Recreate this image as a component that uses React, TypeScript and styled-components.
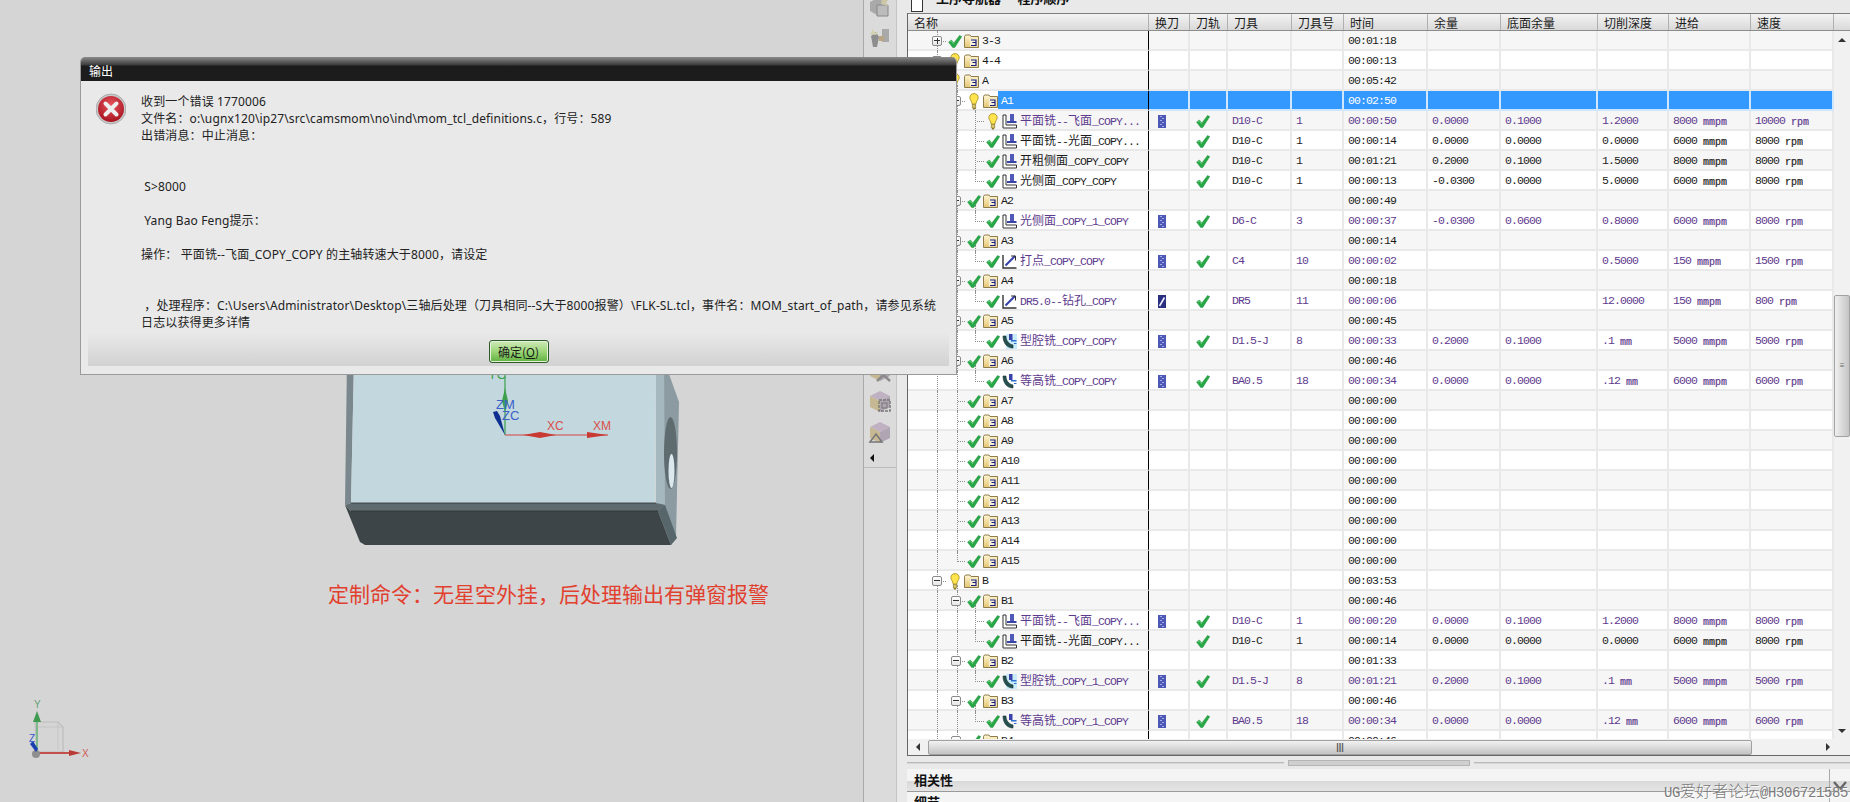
import React from "react";
import styled, { createGlobalStyle } from "styled-components";

const Global = createGlobalStyle`
  html, body { margin: 0; padding: 0; background: #d5d5d5; }
  #root { width: 1850px; height: 802px; overflow: hidden; }
  * { box-sizing: border-box; }
`;

const CJK = `"Noto Sans CJK SC", sans-serif`;
const COLS = [241, 41, 38, 64, 52, 84, 73, 97, 71, 82, 83];
const HEADERS = ["名称", "换刀", "刀轨", "刀具", "刀具号", "时间", "余量", "底面余量", "切削深度", "进给", "速度"];

const Page = styled.div`
  position: relative;
  display: flex;
  width: 1850px;
  height: 802px;
  overflow: hidden;
`;
const Viewport = styled.div`
  position: relative;
  width: 863px;
  flex: none;
  background: #d5d5d5;
`;
const Scene = styled.svg`
  display: block;
  width: 863px;
  height: 802px;
`;
const Caption = styled.div`
  position: absolute;
  left: 328px;
  top: 577px;
  font: 400 21px/32px ${CJK};
  color: #e2402f;
  white-space: nowrap;
`;
const ToolStrip = styled.div`
  width: 34px;
  height: 802px;
  flex: none;
  display: flex;
  flex-direction: column;
  align-items: center;
  background: #dbdbdb;
  border-left: 1px solid #a9a9a9;
  border-right: 1px solid #c4c4c4;
`;
const ToolGroup = styled.div`
  width: 100%;
  height: 472px;
  flex: none;
  display: flex;
  flex-direction: column;
  align-items: center;
  gap: 8px;
  margin-top: -4px;
  border-bottom: 1px solid #bcbcbc;
`;
const ToolGap = styled.div`
  flex: 1;
`;
const StripArrow = styled.div`
  width: 0;
  height: 0;
  margin: 2px 0 5px -16px;
  border-top: 4px solid transparent;
  border-bottom: 4px solid transparent;
  border-right: 4px solid #111;
`;
const Panel = styled.div`
  flex: 1;
  min-width: 0;
  display: flex;
  flex-direction: column;
  padding-left: 10px;
  background: #e9e9e9;
`;
const NavHeader = styled.div`
  height: 13px;
  flex: none;
  display: flex;
  align-items: flex-end;
  padding-left: 4px;
  overflow: hidden;
`;
const NavBox = styled.div`
  width: 12px;
  height: 14px;
  flex: none;
  margin-bottom: 1px;
  background: #fff;
  border: 1px solid #333;
`;
const NavTitle = styled.div`
  margin: 0 0 8px 13px;
  font: 700 13px/14px ${CJK};
  color: #111;
  white-space: pre;
`;
const TableBox = styled.div`
  height: 743px;
  flex: none;
  display: flex;
  flex-direction: column;
  border-top: 1px solid #7d7d7d;
  border-bottom: 1px solid #666;
  border-left: 1px solid #666;
`;
const HeadRow = styled.div`
  height: 17px;
  flex: none;
  display: flex;
  background: linear-gradient(#f3f3f3, #d9d9d9);
  border-bottom: 1px solid #8c8c8c;
`;
const HeadCell = styled.div<{ $w: number }>`
  width: ${(p) => p.$w}px;
  flex: none;
  padding-left: 6px;
  font: 400 12px/17px ${CJK};
  color: #1a1a1a;
  border-right: 1px solid #b0b0b0;
  white-space: nowrap;
`;
const BodyWrap = styled.div`
  height: 708px;
  flex: none;
  display: flex;
`;
const Rows = styled.div`
  width: 926px;
  flex: none;
  overflow: hidden;
`;
const Row = styled.div<{ $odd: boolean; $purple: boolean; $selected: boolean }>`
  height: 20px;
  display: flex;
  background: ${(p) => (p.$odd ? "#fff" : "#f6f6f6")};
  color: ${(p) => (p.$selected ? "#fff" : p.$purple ? "#5e3a8e" : "#1c1c1c")};
  font: 400 11.5px/18px "Liberation Mono", monospace;
  letter-spacing: -0.9px;
  white-space: nowrap;
`;
const NameCell = styled.div<{ $level: number }>`
  position: relative;
  width: ${COLS[0]}px;
  flex: none;
  display: flex;
  align-items: center;
  height: 20px;
  padding: 2px 0 0 ${(p) => 24 + (p.$level - 1) * 19}px;
  border-bottom: 2px solid #e9e9e9;
  border-right: 1px solid #000;
`;
const Guide = styled.i<{ $x: number; $part: string }>`
  position: absolute;
  left: ${(p) => p.$x}px;
  top: ${(p) => (p.$part === "bottom" ? "14px" : "0")};
  height: ${(p) => (p.$part === "top" ? "11px" : p.$part === "bottom" ? "8px" : "22px")};
  border-left: 1px dotted #8f8f8f;
`;
const Branch = styled.div<{ $leaf: boolean }>`
  position: relative;
  width: 15px;
  flex: none;
  display: flex;
  align-items: center;
  padding-left: ${(p) => (p.$leaf ? "6px" : "0")};
`;
const Expander = styled.div`
  position: relative;
  width: 10px;
  height: 10px;
  flex: none;
  background: linear-gradient(#fff, #e6e6e6);
  border: 1px solid #8a8a8a;
  border-radius: 2px;
`;
const Sign = styled.i<{ $open: boolean }>`
  position: absolute;
  left: 1px;
  top: 3px;
  width: 6px;
  height: 2px;
  background: linear-gradient(#333 50%, #333 50%);
  background-size: 6px 1px;
  background-repeat: no-repeat;
  &::after {
    content: "";
    display: ${(p) => (p.$open ? "none" : "block")};
    position: absolute;
    left: 2.5px;
    top: -2.5px;
    width: 1px;
    height: 6px;
    background: #333;
  }
`;
const Tick = styled.i`
  flex: 1;
  margin: 0 1px;
  border-top: 1px dotted #8f8f8f;
`;
const StatusSlot = styled.div`
  position: relative;
  width: 16px;
  height: 16px;
  flex: none;
  display: flex;
  align-items: center;
  justify-content: center;
`;
const NodeIcon = styled.div`
  position: relative;
  width: 16px;
  height: 16px;
  flex: none;
  display: flex;
  align-items: center;
  justify-content: center;
`;
const Label = styled.div<{ $selected: boolean }>`
  flex: 1;
  height: 18px;
  margin-top: -2px;
  padding-left: 3px;
  line-height: 20px;
  background: ${(p) => (p.$selected ? "#3399ff" : "transparent")};
  overflow: hidden;
`;
const Cell = styled.div<{ $w: number; $selected: boolean }>`
  width: ${(p) => p.$w}px;
  flex: none;
  height: 20px;
  padding: 2px 0 0 4px;
  display: flex;
  align-items: center;
  background: ${(p) => (p.$selected ? "#3399ff" : "transparent")};
  border-right: 2px solid ${(p) => (p.$selected ? "#cfe6ff" : "#e9e9e9")};
  border-bottom: 2px solid ${(p) => (p.$selected ? "#cfe6ff" : "#e9e9e9")};
`;
const IconCell = styled(Cell) <{ $pad: number }>`
  padding-left: ${(p) => p.$pad}px;
`;
const Han = styled.span`
  font: 400 12px/18px ${CJK};
  letter-spacing: 0;
`;
const Unit = styled.span`
  font: 400 10px/18px "Liberation Mono", monospace;
  letter-spacing: 0;
  position: relative;
  top: 1px;
  -webkit-text-stroke: 0.2px currentColor;
`;
const VBar = styled.div`
  flex: 1;
  display: flex;
  flex-direction: column;
  align-items: center;
  background: #f1f1f1;
  padding: 7px 0 6px;
`;
const ArrowUp = styled.i`
  width: 0;
  height: 0;
  border-left: 4px solid transparent;
  border-right: 4px solid transparent;
  border-bottom: 4px solid #333;
`;
const ArrowDown = styled.i`
  width: 0;
  height: 0;
  border-left: 4px solid transparent;
  border-right: 4px solid transparent;
  border-top: 4px solid #333;
`;
const VThumb = styled.div`
  width: 16px;
  height: 142px;
  margin: 253px 0 auto;
  display: flex;
  align-items: center;
  justify-content: center;
  font: 400 8px/8px "Liberation Sans", sans-serif;
  color: #666;
  background: linear-gradient(90deg, #f0f0f0, #c4c4c4);
  border: 1px solid #a2a2a2;
  border-radius: 2px;
`;
const HBar = styled.div`
  height: 16px;
  flex: none;
  display: flex;
  align-items: center;
  background: #f1f1f1;
`;
const HSide = styled.div`
  width: 20px;
  height: 16px;
  flex: none;
  display: flex;
  align-items: center;
  justify-content: center;
`;
const ArrowLeft = styled.i`
  border-top: 4px solid transparent;
  border-bottom: 4px solid transparent;
  border-right: 4px solid #333;
`;
const ArrowRight = styled.i`
  border-top: 4px solid transparent;
  border-bottom: 4px solid transparent;
  border-left: 4px solid #333;
  margin-left: auto;
  margin-right: 20px;
`;
const HThumb = styled.div`
  width: 824px;
  height: 15px;
  flex: none;
  display: flex;
  align-items: center;
  justify-content: center;
  font: 700 9px/15px "Liberation Sans", sans-serif;
  color: #555;
  background: linear-gradient(#f2f2f2, #c3c3c3);
  border: 1px solid #a0a0a0;
  border-radius: 2px;
`;
const Splitter = styled.div`
  height: 13px;
  flex: none;
  display: flex;
  align-items: center;
  gap: 4px;
`;
const SplitLine = styled.i`
  flex: 1;
  height: 2px;
  margin-top: 0;
  background: #d8d8d8;
  border-top: 1px solid #b9b9b9;
`;
const SplitHandle = styled.i`
  width: 182px;
  height: 6px;
  flex: none;
  background: #cfcfcf;
  border: 1px solid #b5b5b5;
`;
const Section = styled.div`
  height: 23px;
  flex: none;
  display: flex;
  background: linear-gradient(#f4f4f4 54%, #d9d9d9 54%, #e4e4e4);
  border-bottom: 1px solid #9a9a9a;
`;
const SectionFoot = styled(Section)`
  height: 10px;
  background: #f5f5f5;
  border: 0;
  overflow: hidden;
`;
const SectionTitle = styled.div<{ $top: number }>`
  flex: 1;
  padding: ${(p) => p.$top}px 0 0 7px;
  font: 700 13px/18px ${CJK};
  color: #111;
`;
const Chevron = styled.div`
  width: 21px;
  flex: none;
  padding: 8px 0 0 3px;
  border-left: 1px solid #aaa;
`;
const Watermark = styled.div`
  position: absolute;
  right: 2px;
  top: 780px;
  font: 400 14px/20px "Liberation Mono", monospace;
  letter-spacing: -0.4px;
  color: #7b7b7b;
  text-shadow: 1px 1px 0 #fff;
  white-space: nowrap;
  ${Han} {
    font-size: 16px;
    line-height: 20px;
    font-weight: 300;
    letter-spacing: 0;
  }
`;
const Dialog = styled.div`
  position: absolute;
  left: 80px;
  top: 57px;
  width: 877px;
  height: 318px;
  display: flex;
  flex-direction: column;
  background: #e9e9e9;
  border: 1px solid #9a9a9a;
  border-top: 0;
  border-radius: 5px 5px 0 0;
  overflow: hidden;
`;
const DialogTitle = styled.div`
  height: 24px;
  flex: none;
  padding: 7px 0 0 8px;
  background: linear-gradient(#8a8a8a, #3c3c3c 8px, #1c1c1c 9px);
  font: 400 12px/14px ${CJK};
  color: #fff;
`;
const DialogBody = styled.div`
  flex: 1;
  min-height: 0;
  display: flex;
  gap: 15px;
  padding: 12px 0 0 15px;
`;
const ErrorIcon = styled.svg`
  width: 30px;
  height: 32px;
  flex: none;
`;
const Message = styled.div`
  font: 400 12px/17px "Noto Sans", ${CJK};
  letter-spacing: 0.13px;
  color: #222;
  white-space: pre;
`;
const DialogFoot = styled.div`
  height: 34px;
  flex: none;
  margin: 0 7px 8px;
  padding-top: 8px;
  display: flex;
  justify-content: center;
  background: linear-gradient(#e9e9e9, #d2d2d2);
`;
const OkButton = styled.button`
  width: 60px;
  height: 23px;
  padding: 0;
  font: 400 12px/19px ${CJK};
  color: #1a1a1a;
  background: linear-gradient(#cfe9ba, #9cd678 50%, #5fb03f);
  border: 1px solid #2f5a2c;
  border-radius: 3px;
  box-shadow: inset 0 0 0 1px #e3f2d6;
  u {
    text-decoration: underline;
  }
`;

type RowData = {
  name: string;
  level: number;
  kind: "group" | "face" | "point" | "cavity" | "contour";
  status: "ok" | "bulb";
  exp?: "plus" | "minus";
  change?: "bar" | "slash";
  track?: boolean;
  cells?: string[];
  time: string;
  purple?: boolean;
};

const g = (name: string, level: number, time: string, status: "ok" | "bulb" = "ok", exp?: "plus" | "minus"): RowData => ({
  name, level, kind: "group", status, exp, time,
});
const op = (
  name: string,
  kind: RowData["kind"],
  tool: string,
  no: string,
  time: string,
  stock: string,
  floor: string,
  depth: string,
  feed: string,
  speed: string,
  purple: boolean,
  status: "ok" | "bulb" = "ok",
  change: "bar" | "slash" | undefined = purple ? "bar" : undefined,
): RowData => ({
  name, level: 3, kind, status, change, track: true, purple, time,
  cells: [tool, no, time, stock, floor, depth, feed, speed],
});

const DATA: RowData[] = [
  g("3-3", 1, "00:01:18", "ok", "plus"),
  g("4-4", 1, "00:00:13", "bulb", "plus"),
  g("A", 1, "00:05:42", "bulb", "minus"),
  g("A1", 2, "00:02:50", "bulb", "minus"),
  op("平面铣--飞面_COPY...", "face", "D10-C", "1", "00:00:50", "0.0000", "0.1000", "1.2000", "8000 mmpm", "10000 rpm", true, "bulb"),
  op("平面铣--光面_COPY...", "face", "D10-C", "1", "00:00:14", "0.0000", "0.0000", "0.0000", "6000 mmpm", "8000 rpm", false),
  op("开粗侧面_COPY_COPY", "face", "D10-C", "1", "00:01:21", "0.2000", "0.1000", "1.5000", "8000 mmpm", "8000 rpm", false),
  op("光侧面_COPY_COPY", "face", "D10-C", "1", "00:00:13", "-0.0300", "0.0000", "5.0000", "6000 mmpm", "8000 rpm", false),
  g("A2", 2, "00:00:49", "ok", "minus"),
  op("光侧面_COPY_1_COPY", "face", "D6-C", "3", "00:00:37", "-0.0300", "0.0600", "0.8000", "6000 mmpm", "8000 rpm", true),
  g("A3", 2, "00:00:14", "ok", "minus"),
  op("打点_COPY_COPY", "point", "C4", "10", "00:00:02", "", "", "0.5000", "150 mmpm", "1500 rpm", true),
  g("A4", 2, "00:00:18", "ok", "minus"),
  op("DR5.0--钻孔_COPY", "point", "DR5", "11", "00:00:06", "", "", "12.0000", "150 mmpm", "800 rpm", true, "ok", "slash"),
  g("A5", 2, "00:00:45", "ok", "minus"),
  op("型腔铣_COPY_COPY", "cavity", "D1.5-J", "8", "00:00:33", "0.2000", "0.1000", ".1 mm", "5000 mmpm", "5000 rpm", true),
  g("A6", 2, "00:00:46", "ok", "minus"),
  op("等高铣_COPY_COPY", "contour", "BA0.5", "18", "00:00:34", "0.0000", "0.0000", ".12 mm", "6000 mmpm", "6000 rpm", true),
  ...["A7", "A8", "A9", "A10", "A11", "A12", "A13", "A14", "A15"].map((n) => g(n, 2, "00:00:00")),
  g("B", 1, "00:03:53", "bulb", "minus"),
  g("B1", 2, "00:00:46", "ok", "minus"),
  op("平面铣--飞面_COPY...", "face", "D10-C", "1", "00:00:20", "0.0000", "0.1000", "1.2000", "8000 mmpm", "8000 rpm", true),
  op("平面铣--光面_COPY...", "face", "D10-C", "1", "00:00:14", "0.0000", "0.0000", "0.0000", "6000 mmpm", "8000 rpm", false),
  g("B2", 2, "00:01:33", "ok", "minus"),
  op("型腔铣_COPY_1_COPY", "cavity", "D1.5-J", "8", "00:01:21", "0.2000", "0.1000", ".1 mm", "5000 mmpm", "5000 rpm", true),
  g("B3", 2, "00:00:46", "ok", "minus"),
  op("等高铣_COPY_1_COPY", "contour", "BA0.5", "18", "00:00:34", "0.0000", "0.0000", ".12 mm", "6000 mmpm", "6000 rpm", true),
  g("B4", 2, "00:00:46", "ok", "minus"),
];

function guidesFor(i: number): { x: number; part: string }[] {
  const r = DATA[i];
  const out: { x: number; part: string }[] = [{ x: 29, part: "full" }];
  const lastA = DATA.findIndex((d) => d.name === "A15");
  const aStart = DATA.findIndex((d) => d.name === "A");
  const bStart = DATA.findIndex((d) => d.name === "B");
  if (i === aStart || i === bStart) out.push({ x: 49, part: "bottom" });
  else if (i === lastA) out.push({ x: 49, part: "top" });
  else if ((i > aStart && i < lastA) || i > bStart) out.push({ x: 49, part: "full" });
  if (r.level === 3) {
    const nextIsOp = DATA[i + 1] && DATA[i + 1].level === 3;
    out.push({ x: 67, part: nextIsOp ? "full" : "top" });
  } else if (r.level === 2 && DATA[i + 1] && DATA[i + 1].level === 3) {
    out.push({ x: 67, part: "bottom" });
  }
  return out;
}

const mixed = (s: string) =>
  s.split(/([\u3000-\u9fff\uff00-\uffef]+)/).map((part, i) =>
    /[\u3000-\u9fff\uff00-\uffef]/.test(part) ? <Han key={i}>{part}</Han> : part,
  );

const measure = (s: string) => {
  const m = /^(\S+) (mmpm|rpm|mm)$/.exec(s);
  if (!m) return s;
  return (
    <span>
      {m[1]}
      {"\u00a0"}
      <Unit>{m[2]}</Unit>
    </span>
  );
};

const Check = () => (
  <svg width="14" height="13" viewBox="0 0 14 13">
    <path d="M0.5 7 L3.5 5 L5.8 8 L11.5 0.5 L13.8 1.5 L6.8 12.5 L4.6 12.5 Z" fill="#27a745" stroke="#1d8a3a" strokeWidth="0.4" />
    <path d="M2 7 L3.5 6 L5.8 9" stroke="#7fdc8e" strokeWidth="0.7" fill="none" />
  </svg>
);
const Bulb = () => (
  <svg width="10" height="17" viewBox="0 0 10 17">
    <path d="M5 0.6 C2.3 0.6 0.8 2.5 0.8 4.6 C0.8 6.8 2.8 8 3.2 11 L6.8 11 C7.2 8 9.2 6.8 9.2 4.6 C9.2 2.5 7.7 0.6 5 0.6 Z" fill="#ffe44d" stroke="#a08a1e" strokeWidth="0.8" />
    <rect x="3.2" y="11.5" width="3.6" height="3.5" fill="#d8c46a" stroke="#8a7a30" strokeWidth="0.6" />
    <rect x="4" y="15" width="2" height="1.5" fill="#8a7a30" />
  </svg>
);
const Folder = () => (
  <svg width="15" height="14" viewBox="0 0 15 14">
    <path d="M0.5 2.5 L1.5 1 L6 1 L7 2.5 L14.5 2.5 L14.5 13.5 L0.5 13.5 Z" fill="url(#fld)" stroke="#8d7c4c" />
    <defs>
      <linearGradient id="fld" x1="0" y1="0" x2="0" y2="1">
        <stop offset="0" stopColor="#fff6d4" />
        <stop offset="1" stopColor="#e4c571" />
      </linearGradient>
    </defs>
    <rect x="6" y="5" width="7.5" height="7.5" fill="#f6efd6" />
    <path d="M7 6 H12 V8.5 H8.5 M12 8.5 V11.5 H7" fill="none" stroke="#1b1f7a" strokeWidth="1.2" />
  </svg>
);
const FaceOp = () => (
  <svg width="15" height="16" viewBox="0 0 15 16">
    <path d="M1 2 V15 H14.5 V12 H4 V2 Z" fill="#fff" stroke="#333" strokeWidth="1" />
    <rect x="8" y="1" width="4" height="7" fill="#5058b8" />
    <rect x="5" y="8" width="9.5" height="2" fill="#3a44a8" />
  </svg>
);
const PointOp = () => (
  <svg width="15" height="16" viewBox="0 0 15 16">
    <path d="M1 2 V15 H14.5" fill="none" stroke="#333" strokeWidth="1.4" />
    <path d="M3.5 12.5 L13 3" stroke="#3a44a8" strokeWidth="2.2" />
    <path d="M9 3 H13.5 V7.5" fill="none" stroke="#333" strokeWidth="1" />
  </svg>
);
const CavityOp = ({ light }: { light: boolean }) => (
  <svg width="15" height="16" viewBox="0 0 15 16">
    {light && <rect x="4" y="1" width="11" height="15" fill="#c8ecfa" />}
    <path d="M1 3 H4 C4 8 7 11 11 12 V15 C5 15 1 10 1 3 Z" fill="#25504f" stroke="#16302f" strokeWidth="0.6" />
    <rect x="7" y="1" width="3.5" height="6" fill="#3a44a8" />
    <rect x="9" y="7" width="5.5" height="1.5" fill="#2c6fd0" />
    <rect x="12" y="10" width="2.5" height="1" fill="#2c6fd0" />
  </svg>
);
const ChangeIcon = ({ slash }: { slash: boolean }) => (
  <svg width="8" height="13" viewBox="0 0 8 13">
    <rect width="8" height="13" fill={slash ? "#2a2f80" : "#4d57b6"} />
    {slash ? (
      <path d="M1.5 11 L6.5 2.5" stroke="#eef" strokeWidth="1.6" />
    ) : (
      [1, 3, 5, 7, 9, 11].map((y) => <rect key={y} x={y % 4 === 1 ? 2 : 4} y={y} width="2" height="1" fill="#a4aae2" />)
    )}
  </svg>
);

const Cube = ({ mark }: { mark: "tool" | "square" | "triangle" | "star" | "x" }) => (
  <svg width="24" height="23" viewBox="0 0 24 23">
    {mark === "star" ? (
      <>
        <path d="M2 6 L10 2 L17 5 L17 15 L9 19 L2 15 Z" fill="#a9a9a9" />
        <path d="M9 9 L20 9 L20 20 L9 20 Z" fill="#bbb" stroke="#888" />
        <path d="M14 0 L16 4 L21 3 L18 7 L21 10 L16 9 L13 8 Z" fill="#cbc6a6" />
      </>
    ) : mark === "tool" ? (
      <>
        <path d="M3 9 L8 5 L11 10 L9 20 L5 20 Z" fill="#8d8d8d" />
        <path d="M5 2 L7 6 L11 4 L8 8 L2 7 Z" fill="#d5d1b1" />
        <rect x="14" y="2" width="7" height="13" fill="#a9a9a9" />
        <rect x="11" y="9" width="5" height="5" fill="#b9a583" />
      </>
    ) : (
      <>
        <path d="M2 6 L12 1 L22 6 L12 11 Z" fill="#bfb0c2" />
        <path d="M2 6 L12 11 L12 22 L2 17 Z" fill="#c6b892" />
        <path d="M22 6 L12 11 L12 22 L22 17 Z" fill="#b0a5b3" />
        {mark === "square" && (
          <>
            <rect x="11" y="10" width="11" height="11" fill="none" stroke="#777" strokeWidth="1.4" strokeDasharray="3 1" />
            <rect x="14" y="13" width="5" height="5" fill="none" stroke="#777" />
          </>
        )}
        {mark === "triangle" && <path d="M2 21 L8 13 L14 21 Z" fill="none" stroke="#777" strokeWidth="1.6" />}
        {mark === "x" && <path d="M9 10 L22 22 M22 10 L9 22" stroke="#8a8a8a" strokeWidth="2.4" />}
      </>
    )}
  </svg>
);

const PartScene = () => (
  <Scene viewBox="0 0 863 802">
    <polygon points="658,360 664,360 679,402 676,538 671,545 658,511" fill="#8b9ba1" />
    <polygon points="656,360 664,360 665,505 656,503" fill="#a6b8bf" />
    <ellipse cx="670.5" cy="453" rx="6.5" ry="36" fill="#5e6b6f" />
    <ellipse cx="671.5" cy="471" rx="3" ry="17" fill="#dbe9ef" />
    <polygon points="347,360 354,360 351,503 345,505" fill="#7a888e" />
    <polygon points="354,360 656,360 655,503 351,503" fill="#c3d7df" />
    <polygon points="345,505 351,503 656,503 665,505 658,511 351,511" fill="#5f6b6e" />
    <polygon points="345,505 351,511 658,511 671,545 365,545 360,542" fill="#3e4548" />
    <polygon points="658,511 665,505 677,538 671,545" fill="#57666a" />
    <path d="M351 503 H656 M351 511 H658" stroke="#2c3234" strokeWidth="0.8" />
    <path d="M505 372 V435" stroke="#3aa04a" strokeWidth="1.2" />
    <polygon points="505,388 508,401 505,412 502,401" fill="#3aa04a" />
    <text x="488" y="379" fontFamily="Liberation Sans" fontSize="13" fill="#3aa04a">YC</text>
    <text x="496" y="409" fontFamily="Liberation Sans" fontSize="13" fill="#3a62c8">ZM</text>
    <text x="502" y="420" fontFamily="Liberation Sans" fontSize="13" fill="#3a62c8">ZC</text>
    <path d="M505 435 L495 418 L493 412 L497 411 L500 416 Z" fill="#0f2f90" />
    <path d="M505 435 H608" stroke="#d8453f" strokeWidth="1.2" />
    <polygon points="523,435 540,432 556,435 540,438" fill="#c93a34" />
    <polygon points="587,432 608,435 587,438" fill="#c93a34" />
    <text x="547" y="430" fontFamily="Liberation Sans" fontSize="12" fill="#d8504a">XC</text>
    <text x="593" y="430" fontFamily="Liberation Sans" fontSize="12" fill="#d8504a">XM</text>

    <g fill="none" stroke="#bdbdbd" strokeWidth="1.2">
      <path d="M35 722 H58 L63 727 V752 H37 Z" />
      <path d="M58 722 V750" opacity="0.5" />
      <path d="M38 727 H63" opacity="0.5" />
    </g>
    <path d="M37 753 V722" stroke="#7fb98b" strokeWidth="2" />
    <polygon points="37,711 41,722 33,722" fill="#3f9a52" />
    <text x="34" y="708" fontFamily="Liberation Sans" fontSize="10" fill="#6a9f77">Y</text>
    <path d="M36 753 H70" stroke="#c4504c" strokeWidth="2" />
    <polygon points="69,750 81,753 69,756" fill="#b93b36" />
    <text x="82" y="757" fontFamily="Liberation Sans" fontSize="10" fill="#d05a56">X</text>
    <circle cx="36" cy="754" r="4" fill="#8f8f8f" />
    <path d="M36 752 L30 744 L33 741 L38 749 Z" fill="#1a3fb0" />
    <text x="29" y="742" fontFamily="Liberation Sans" fontSize="10" fill="#2f55cc">Z</text>
  </Scene>
);

const nodeIcon = (r: RowData) => {
  if (r.kind === "group") return <Folder />;
  if (r.kind === "face") return <FaceOp />;
  if (r.kind === "point") return <PointOp />;
  return <CavityOp light={r.kind === "cavity"} />;
};

export default function App() {
  return (
    <Page>
      <Global />
      <Viewport>
        <PartScene />
        <Caption>定制命令：无星空外挂，后处理输出有弹窗报警</Caption>
      </Viewport>
      <ToolStrip>
        <ToolGroup>
          <Cube mark="star" />
          <Cube mark="tool" />
          <ToolGap />
          <Cube mark="x" />
          <Cube mark="square" />
          <Cube mark="triangle" />
          <StripArrow />
        </ToolGroup>
      </ToolStrip>
      <Panel>
        <NavHeader>
          <NavBox />
          <NavTitle>工序导航器  -  程序顺序</NavTitle>
        </NavHeader>
        <TableBox>
          <HeadRow>
            {HEADERS.map((h, i) => (
              <HeadCell key={h} $w={COLS[i]}>{h}</HeadCell>
            ))}
          </HeadRow>
          <BodyWrap>
            <Rows>
              {DATA.map((r, i) => {
                const selected = r.name === "A1";
                return (
                  <Row key={i} $odd={i % 2 === 1} $purple={!!r.purple} $selected={selected}>
                    <NameCell $level={r.level}>
                      {guidesFor(i).map((gd, k) => (
                        <Guide key={k} $x={gd.x} $part={gd.part} />
                      ))}
                      <Branch $leaf={!r.exp}>
                        {r.exp && (
                          <Expander>
                            <Sign $open={r.exp === "minus"} />
                          </Expander>
                        )}
                        <Tick />
                      </Branch>
                      <StatusSlot>{r.status === "ok" ? <Check /> : <Bulb />}</StatusSlot>
                      <NodeIcon>{nodeIcon(r)}</NodeIcon>
                      <Label $selected={selected}>{mixed(r.name)}</Label>
                    </NameCell>
                    <IconCell $w={COLS[1]} $selected={selected} $pad={9}>
                      {r.change && <ChangeIcon slash={r.change === "slash"} />}
                    </IconCell>
                    <IconCell $w={COLS[2]} $selected={selected} $pad={6}>
                      {r.track && <Check />}
                    </IconCell>
                    {r.cells
                      ? r.cells.map((c, k) => (
                          <Cell key={k} $w={COLS[k + 3]} $selected={selected}>
                            {measure(c)}
                          </Cell>
                        ))
                      : COLS.slice(3).map((w, k) => (
                          <Cell key={k} $w={w} $selected={selected}>
                            {k === 2 ? r.time : ""}
                          </Cell>
                        ))}
                  </Row>
                );
              })}
            </Rows>
            <VBar>
              <ArrowUp />
              <VThumb>≡</VThumb>
              <ArrowDown />
            </VBar>
          </BodyWrap>
          <HBar>
            <HSide>
              <ArrowLeft />
            </HSide>
            <HThumb>|||</HThumb>
            <ArrowRight />
          </HBar>
        </TableBox>
        <Splitter>
          <SplitLine />
          <SplitHandle />
          <SplitLine />
        </Splitter>
        <Section>
          <SectionTitle $top={2}>相关性</SectionTitle>
          <Chevron>
            <svg width="14" height="10" viewBox="0 0 14 10">
              <path d="M1 1 L7 8 L13 1" fill="none" stroke="#666" strokeWidth="2.4" />
            </svg>
          </Chevron>
        </Section>
        <SectionFoot>
          <SectionTitle $top={1}>细节</SectionTitle>
          <Chevron>
            <svg width="14" height="10" viewBox="0 0 14 10">
              <path d="M1 1 L7 8 L13 1" fill="none" stroke="#666" strokeWidth="2.4" />
            </svg>
          </Chevron>
        </SectionFoot>
      </Panel>
      <Dialog>
        <DialogTitle>输出</DialogTitle>
        <DialogBody>
          <ErrorIcon viewBox="0 0 30 32">
            <defs>
              <radialGradient id="err" cx="0.5" cy="0.35" r="0.7">
                <stop offset="0" stopColor="#e8545c" />
                <stop offset="1" stopColor="#a20f1c" />
              </radialGradient>
            </defs>
            <circle cx="15" cy="16" r="15" fill="#c9c9c9" stroke="#8f8f8f" strokeWidth="0.6" />
            <circle cx="15" cy="16" r="13" fill="url(#err)" />
            <path d="M9.5 10.5 L20.5 21.5 M20.5 10.5 L9.5 21.5" stroke="#eee" strokeWidth="4" strokeLinecap="round" />
          </ErrorIcon>
          <Message>
            {`收到一个错误 1770006
文件名：o:\\ugnx120\\ip27\\src\\camsmom\\no\\ind\\mom_tcl_definitions.c，行号：589
出错消息：中止消息：


 S>8000

 Yang Bao Feng提示：

操作： 平面铣--飞面_COPY_COPY 的主轴转速大于8000，请设定


 ，处理程序：C:\\Users\\Administrator\\Desktop\\三轴后处理（刀具相同--S大于8000报警）\\FLK-SL.tcl，事件名：MOM_start_of_path，请参见系统
日志以获得更多详情`}
          </Message>
        </DialogBody>
        <DialogFoot>
          <OkButton>
            确定(<u>O</u>)
          </OkButton>
        </DialogFoot>
      </Dialog>
      <Watermark>{mixed("UG爱好者论坛@H306721585")}</Watermark>
    </Page>
  );
}
